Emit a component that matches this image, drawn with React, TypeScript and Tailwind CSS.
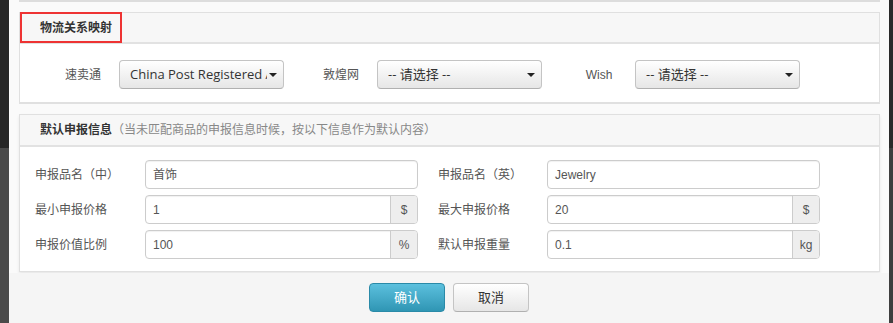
import React from "react";

const font = "font-['Liberation_Sans','Noto_Sans_CJK_SC',sans-serif]";

const Select = ({ value }: { value: string }) => (
  <div className="relative flex h-[29px] w-[165px] items-center rounded-[4px] border border-[#c4c4c4] border-b-[#b0b0b0] bg-gradient-to-b from-white to-[#e6e6e6] pl-[10px] pr-[16px]">
    <div className="flex-1 overflow-hidden whitespace-nowrap font-['Open_Sans','Noto_Sans_CJK_SC',sans-serif] text-[13px] text-[#333]">
      {value}
    </div>
    <span className="absolute right-[6px] top-[12px] h-0 w-0 border-x-[4px] border-t-[4px] border-x-transparent border-t-[#222]" />
  </div>
);

const Field = ({ value, addon }: { value: string; addon?: string }) => (
  <div className="flex h-[29px] w-[273px] overflow-hidden rounded-[4px] border border-[#ccc] bg-white shadow-[inset_0_1px_1px_rgba(0,0,0,0.06)]">
    <div className="flex flex-1 items-center px-[7px] text-[12px] text-[#555]">
      {value}
    </div>
    {addon && (
      <div className="flex w-[27px] items-center justify-center border-l border-[#ccc] bg-[#eee] text-[12px] text-[#555]">
        {addon}
      </div>
    )}
  </div>
);

const Row = ({
  l1,
  v1,
  a1,
  l2,
  v2,
  a2,
}: {
  l1: string;
  v1: string;
  a1?: string;
  l2: string;
  v2: string;
  a2?: string;
}) => (
  <div className="flex items-center">
    <div className="w-[110px] text-[12px] text-[#555]">{l1}</div>
    <Field value={v1} addon={a1} />
    <div className="ml-[20px] w-[109px] text-[12px] text-[#555]">{l2}</div>
    <Field value={v2} addon={a2} />
  </div>
);

export default function App() {
  const mapping = [
    { label: "速卖通", value: "China Post Registered Air Mail" },
    { label: "敦煌网", value: "-- 请选择 --" },
    { label: "Wish", value: "-- 请选择 --" },
  ];

  return (
    <div className={`flex h-[323px] w-[893px] overflow-hidden ${font}`}>
      {/* backdrop, left */}
      <div className="flex w-[9px] flex-col">
        <div className="h-[148px] bg-[#262626]" />
        <div className="flex-1 bg-[#4a4a4a]" />
      </div>

      {/* modal */}
      <div className="flex w-[880px] flex-col">
        <div className="bg-[#fafafa] pl-[10px] pr-[9px] pb-[1px]">
          <div className="h-[2px] bg-[#ddd]" />

          {/* 物流关系映射 */}
          <div className="mt-[10px] border border-b-2 border-[#e0e0e0] bg-white">
            <div className="relative flex h-[31px] items-center border-b-2 border-[#e2e2e2] bg-[#f7f7f7] pl-[20px]">
              <span className="text-[12px] font-bold text-[#333]">物流关系映射</span>
              <div className="absolute left-0 top-[-1px] h-[31px] w-[102px] border-2 border-[#ee3333]" />
            </div>
            <div className="flex pb-[13px] pl-[27px] pt-[16px]">
              {mapping.map((m) => (
                <div key={m.label} className="mr-[21px] flex items-center">
                  <div className="w-[72px] text-center text-[12px] text-[#555]">{m.label}</div>
                  <Select value={m.value} />
                </div>
              ))}
            </div>
          </div>

          {/* 默认申报信息 */}
          <div className="mt-[10px] border border-[#e0e0e0] bg-white shadow-[0_2px_3px_rgba(0,0,0,0.08)]">
            <div className="flex h-[32px] items-center border-b-2 border-[#e2e2e2] bg-[#f7f7f7] pl-[20px] text-[12px]">
              <span className="font-bold text-[#333]">默认申报信息</span>
              <span className="text-[#888]">（当未匹配商品的申报信息时候，按以下信息作为默认内容）</span>
            </div>
            <div className="flex flex-col gap-[6px] pb-[12px] pl-[15px] pt-[13px]">
              <Row l1="申报品名（中）" v1="首饰" l2="申报品名（英）" v2="Jewelry" />
              <Row l1="最小申报价格" v1="1" a1="$" l2="最大申报价格" v2="20" a2="$" />
              <Row l1="申报价值比例" v1="100" a1="%" l2="默认申报重量" v2="0.1" a2="kg" />
            </div>
          </div>
        </div>

        {/* footer */}
        <div className="flex flex-1 justify-center gap-[8px] bg-[#f5f5f5] pt-[10px]">
          <button className="h-[29px] w-[76px] rounded-[4px] border border-[#2a8aa8] bg-gradient-to-b from-[#5bc0de] to-[#2f96b4] text-[13px] text-white">
            确认
          </button>
          <button className="h-[29px] w-[76px] rounded-[4px] border border-[#c4c4c4] border-b-[#b0b0b0] bg-gradient-to-b from-white to-[#e6e6e6] text-[13px] text-[#333]">
            取消
          </button>
        </div>
      </div>

      {/* backdrop, right */}
      <div className="flex w-[4px] flex-col">
        <div className="h-[148px] bg-[#2a2a2a]" />
        <div className="flex-1 bg-[#3e3e3e]" />
      </div>
    </div>
  );
}
